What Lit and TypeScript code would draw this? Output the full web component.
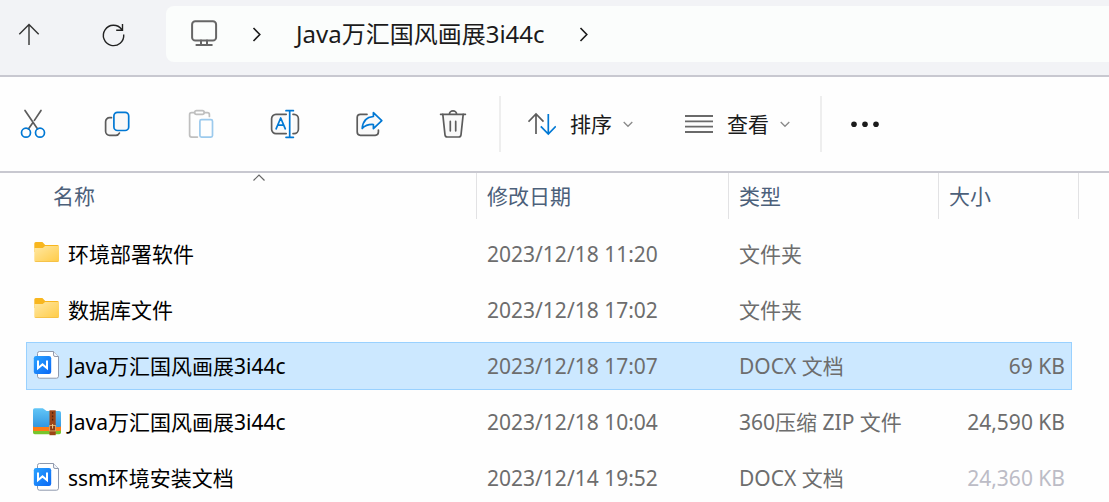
import { LitElement, html, css, svg } from "lit";
import { customElement, property, state } from "lit/decorators.js";
import { classMap } from "lit/directives/class-map.js";

type FileKind = "folder" | "doc" | "zip";

interface FileEntry {
  kind: FileKind;
  name: string;
  modified: string;
  type: string;
  size: string;
  faded?: boolean;
}

const files: FileEntry[] = [
  { kind: "folder", name: "环境部署软件", modified: "2023/12/18 11:20", type: "文件夹", size: "" },
  { kind: "folder", name: "数据库文件", modified: "2023/12/18 17:02", type: "文件夹", size: "" },
  { kind: "doc", name: "Java万汇国风画展3i44c", modified: "2023/12/18 17:07", type: "DOCX 文档", size: "69 KB" },
  { kind: "zip", name: "Java万汇国风画展3i44c", modified: "2023/12/18 10:04", type: "360压缩 ZIP 文件", size: "24,590 KB" },
  { kind: "doc", name: "ssm环境安装文档", modified: "2023/12/14 19:52", type: "DOCX 文档", size: "24,360 KB", faded: true },
];

const GREY = "#5c5c5c";
const BLUE = "#0078d4";

const toolIcons = {
  cut: svg`
    <path d="M8 2.5 20.6 21M24 2.5 17.4 12.4M15.6 15 11.4 21" stroke="${GREY}"/>
    <circle cx="9" cy="24.7" r="4.5" stroke="${BLUE}"/><circle cx="23" cy="24.7" r="4.5" stroke="${BLUE}"/>`,
  copy: svg`
    <path d="M10.5 9.7H8.6a4 4 0 0 0-4 4v9.6a4 4 0 0 0 4 4h6.2a4 4 0 0 0 3.6-2.2" stroke="${GREY}" fill="#f9f9f9"/>
    <rect x="12.9" y="4.3" width="14.8" height="18.2" rx="3.6" stroke="${BLUE}" fill="#f9f9f9"/>`,
  paste: svg`
    <g opacity=".38"><path d="M9.5 4.7H6.6a2 2 0 0 0-2 2v20.4a2 2 0 0 0 2 2h5.8M19.4 4.7h3a2 2 0 0 1 2 2v1.8" stroke="${GREY}"/>
    <rect x="9.6" y="2.6" width="9.6" height="3.8" rx="1.9" stroke="${GREY}"/>
    <rect x="14.9" y="11.6" width="12.6" height="17.5" rx="1.6" stroke="${BLUE}"/></g>`,
  rename: svg`
    <path d="M17.2 6.3H7a4.4 4.4 0 0 0-4.4 4.4v10.5A4.4 4.4 0 0 0 7 25.6h10.2M24 6.3h1a4.4 4.4 0 0 1 4.4 4.4v10.5a4.4 4.4 0 0 1-4.4 4.4h-1" stroke="${GREY}" fill="#f9f9f9"/>
    <path d="M7.1 20.8 11.7 10l4.6 10.8M8.7 17.2h6M20.7 2.7v26.6M17 2.7h7.4M17 29.3h7.4" stroke="${BLUE}"/>`,
  share: svg`
    <path d="M14 6.3H7.4a3.2 3.2 0 0 0-3.2 3.2v14.6a3.2 3.2 0 0 0 3.2 3.2h14.8a3.2 3.2 0 0 0 3.2-3.2v-2" stroke="${GREY}" fill="#f9f9f9"/>
    <path d="M20.4 4.7 28.8 12.7 20.4 20.7v-4.2c-5-.3-8.3.9-11.2 4 .5-7 4.4-11.5 11.2-12z" stroke="${BLUE}" fill="#f9f9f9"/>`,
  trash: svg`
    <path d="M5.8 6.3 8 26.9a2.4 2.4 0 0 0 2.4 2.1h11.2a2.4 2.4 0 0 0 2.4-2.1l2.2-20.6" stroke="${GREY}" fill="#f9f9f9"/>
    <path d="M3.6 6.3h24.8M12.4 6.1a3.6 3.3 0 0 1 7.2 0M13.3 13.4v9.4M18.7 13.4v9.4" stroke="${GREY}"/>`,
};

const fileIcons = {
  folder: svg`
    <path d="M1.3 5.6A1.5 1.5 0 0 1 2.8 4.1h6.6l2.8 2.9h12.2a1.6 1.6 0 0 1 1.6 1.6V14H1.3z" fill="#f8b61e"/>
    <path d="M1.3 9.9h8.5l2.2-1.9h14v14.4a1.6 1.6 0 0 1-1.6 1.6H2.9a1.6 1.6 0 0 1-1.6-1.6z" fill="url(#folderFill)"/>
    <path d="M1.7 23.2q.4.8 1.4.8h21.2q1 0 1.4-.8z" fill="#f3bd42"/>`,
  doc: svg`
    <path d="M6.5 1.500h14l5 5v19.700a2 2 0 0 1-2 2h-17a2 2 0 0 1-2-2V3.500a2 2 0 0 1 2-2z" fill="#fff" stroke="#8f99ad"/>
    <path d="M20.500 1.500v3.400a1.600 1.600 0 0 0 1.600 1.600h3.400" fill="#f1f4f9" stroke="#8f99ad"/>
    <rect x=".8" y="6" width="17.4" height="18" rx="2.2" fill="url(#docFill)"/>
    <path d="M5 10.600v7.600l4.500-3.800 4.500 3.800v-7.600" fill="none" stroke="#fff" stroke-width="2"/>`,
  zip: svg`
    <path d="M0 20h28v6.5a1.8 1.8 0 0 1-1.8 1.8H1.8A1.8 1.8 0 0 1 0 26.5z" fill="#77c52c"/>
    <path d="M0 19h28v4.6a1.5 1.5 0 0 1-1.5 1.5h-25A1.5 1.5 0 0 1 0 23.6z" fill="#ff7b16"/>
    <path d="M0 4a1.8 1.8 0 0 1 1.8-1.8h8L13.6 5h12.6A1.8 1.8 0 0 1 28 6.8v12.8a1.5 1.5 0 0 1-1.5 1.5h-25A1.5 1.5 0 0 1 0 19.6z" fill="url(#zipFill)"/>
    <path d="M16.5 4.3h6.2v24.9h-6.2z" fill="#9c4517"/>
    <path d="M19.6 6v10" stroke="#4f2310" stroke-width="1.3" stroke-dasharray="1.8 1.6"/>
    <rect x="16.6" y="19.5" width="6" height="5.4" fill="#8a3a10" stroke="#dca765" stroke-width="1"/>
    <path d="M19.6 18v4.6" stroke="#f3cf8d"/>`,
};

@customElement("file-icon")
class FileIcon extends LitElement {
  @property() kind: FileKind = "folder";

  static styles = css`
    :host { display: block; flex: none; width: 28px; height: 32px; }
    .glyph { display: block; width: 28px; height: 32px; }
  `;

  render() {
    return html`<svg class="glyph" viewBox="0 0 28 32" aria-hidden="true">
      <defs>
        <linearGradient id="folderFill" x1="0" y1="0" x2="1" y2="1">
          <stop offset="0" stop-color="#ffe8a4"/><stop offset="1" stop-color="#ffcb45"/>
        </linearGradient>
        <linearGradient id="docFill" x1="0" y1="0" x2="1" y2="1">
          <stop offset="0" stop-color="#2ba3ff"/><stop offset="1" stop-color="#0a68f5"/>
        </linearGradient>
        <linearGradient id="zipFill" x1="0" y1="0" x2="0" y2="1">
          <stop offset="0" stop-color="#62c6f7"/><stop offset="1" stop-color="#3397e0"/>
        </linearGradient>
      </defs>
      ${fileIcons[this.kind]}
    </svg>`;
  }
}

@customElement("app-root")
class AppRoot extends LitElement {
  @state() private selected = 2;

  static styles = css`
    :host {
      display: block;
      min-height: 100vh;
      overflow: hidden;
      background: #fefefe;
      color: #1b1b1b;
      font-family: "Noto Sans", "Noto Sans CJK SC", sans-serif;
      font-size: 21px;
      line-height: 32px;
    }
    button {
      padding: 0;
      border: 0;
      background: none;
      color: inherit;
      font: inherit;
    }
    svg { display: block; flex: none; fill: none; }
    .nav {
      display: flex;
      align-items: center;
      gap: 36px;
      padding: 6px 0 13px 5px;
      background: #f2f3f6;
      border-bottom: 2px solid #c8c8d0;
    }
    .icon-button {
      display: grid;
      place-items: center;
      flex: none;
      width: 48px;
      height: 48px;
    }
    .address {
      flex: 1;
      display: flex;
      align-items: center;
      height: 56px;
      margin-left: -7px;
      padding-left: 24px;
      border-radius: 8px 0 0 8px;
      background: #fbfdfc;
    }
    .crumb-arrow { margin: 0 34px; }
    .crumb {
      color: inherit;
      text-decoration: none;
      font-size: 24px;
      white-space: nowrap;
    }
    .toolbar {
      display: flex;
      align-items: center;
      height: 94px;
      border-bottom: 2px solid #c8c8d0;
    }
    .tools {
      display: flex;
      gap: 36px;
      padding: 0 22px 0 9px;
    }
    .tool { stroke-width: 1.7; stroke-linecap: round; stroke-linejoin: round; }
    .rule { flex: none; width: 2px; height: 56px; background: #eeeeee; }
    .menus { display: flex; gap: 52px; padding: 0 30px 0 27px; }
    .menu { display: flex; align-items: center; white-space: nowrap; }
    .menu-label { margin: 0 11px 0 14px; }
    .more { margin-left: 28px; }
    .dots { fill: #1b1b1b; }
    .list {
      width: calc(100% - 63px);
      margin: -8px 37px 0 26px;
      table-layout: fixed;
      border-collapse: separate;
      border-spacing: 0 8px;
    }
    .col-date { width: 252px; }
    .col-type { width: 210px; }
    .col-size { width: 133px; }
    .head { height: 49px; padding: 0; vertical-align: top; font-weight: 400; text-align: left; }
    .head-box {
      position: relative;
      height: 46px;
      border-right: 1px solid #e2e2e4;
      padding: 0 10px;
    }
    .head-name { margin-left: 15px; padding-left: 12px; }
    .head-last { margin-right: -7px; }
    .head-button { height: 46px; color: #4c607a; }
    .sort-mark { position: absolute; top: 1px; left: 50%; transform: translateX(-50%); }
    .cell {
      height: 46px;
      padding: 0 10px;
      border: solid transparent;
      border-width: 1px 0;
      color: #6d6d6d;
      white-space: nowrap;
    }
    .cell-name { padding: 0 0 0 6px; border-left-width: 1px; }
    .cell-size { padding: 0 6px 0 0; border-right-width: 1px; text-align: right; }
    .selected .cell { background: #cce8ff; border-color: #99d1ff; }
    .file { display: flex; align-items: center; gap: 7px; color: #000; text-decoration: none; }
    .faded { color: #bcbcc6; }
  `;

  private tool(name: keyof typeof toolIcons, label: string) {
    return html`<button class="icon-button" aria-label=${label} ?disabled=${name === "paste"}>
      <svg class="tool" width="32" height="32" viewBox="0 0 32 32">${toolIcons[name]}</svg>
    </button>`;
  }

  private chevron() {
    return html`<svg width="10" height="32" viewBox="0 0 10 32"><path d="m.7 14 4.3 4.3L9.3 14" stroke="#8a8a8a" stroke-width="1.3"/></svg>`;
  }

  private crumbArrow() {
    return html`<svg class="crumb-arrow" width="10" height="32" viewBox="0 0 10 32"><path d="m1.5 10 6.3 6.5-6.3 6.5" stroke="#1b1b1b" stroke-width="1.6"/></svg>`;
  }

  render() {
    return html`
      <nav class="nav">
        <button class="icon-button" aria-label="向上">
          <svg width="32" height="32" viewBox="0 0 32 32"><path d="M16 27V6.5M6.3 16.3 16 6.5l9.7 9.8" stroke="#333" stroke-width="1.4"/></svg>
        </button>
        <button class="icon-button" aria-label="刷新">
          <svg width="32" height="32" viewBox="0 0 32 32"><path d="M24.7 11.3A10.2 10.2 0 1 0 26.7 16.5M25.5 6v6.2h-6.3" stroke="#222" stroke-width="1.4"/></svg>
        </button>
        <div class="address">
          <svg width="28" height="32" viewBox="0 0 28 32" stroke="#666" stroke-width="2"><rect x="2.1" y="3.2" width="24" height="19.4" rx="3.2"/><path d="M11 22.6v4M17 22.6v4M6.4 26.9h15.4" stroke-linecap="round"/></svg>
          ${this.crumbArrow()}
          <a class="crumb" href="#">Java万汇国风画展3i44c</a>
          ${this.crumbArrow()}
        </div>
      </nav>
      <div class="toolbar" role="toolbar">
        <div class="tools">
          ${this.tool("cut", "剪切")} ${this.tool("copy", "复制")} ${this.tool("paste", "粘贴")}
          ${this.tool("rename", "重命名")} ${this.tool("share", "共享")} ${this.tool("trash", "删除")}
        </div>
        <span class="rule"></span>
        <div class="menus">
          <button class="menu">
            <svg width="28" height="32" viewBox="0 0 28 32" stroke-width="1.7"><path d="M8 26V6M.5 13.7 8 6l7.5 7.7" stroke="${GREY}"/><path d="M20.3 6v20M12.8 18.3l7.5 7.7 7.5-7.7" stroke="${BLUE}"/></svg>
            <span class="menu-label">排序</span>${this.chevron()}
          </button>
          <button class="menu">
            <svg width="28" height="32" viewBox="0 0 28 32" stroke="#6a6a6a" stroke-width="1.8"><path d="M0 8h28M0 13.3h28M0 18.7h28M0 24h28"/></svg>
            <span class="menu-label">查看</span>${this.chevron()}
          </button>
        </div>
        <span class="rule"></span>
        <button class="more" aria-label="更多">
          <svg class="dots" width="30" height="32" viewBox="0 0 30 32"><circle cx="4" cy="16.3" r="2.8"/><circle cx="15" cy="16.3" r="2.8"/><circle cx="26" cy="16.3" r="2.8"/></svg>
        </button>
      </div>
      <table class="list">
        <colgroup><col /><col class="col-date" /><col class="col-type" /><col class="col-size" /></colgroup>
        <thead>
          <tr>
            <th class="head" aria-sort="ascending"><div class="head-box head-name"><button class="head-button">名称</button>
              <svg class="sort-mark" width="12" height="8" viewBox="0 0 12 8"><path d="M.5 6.5 6 1l5.5 5.5" stroke="#666" stroke-width="1.2"/></svg></div></th>
            <th class="head"><div class="head-box"><button class="head-button">修改日期</button></div></th>
            <th class="head"><div class="head-box"><button class="head-button">类型</button></div></th>
            <th class="head"><div class="head-box head-last"><button class="head-button">大小</button></div></th>
          </tr>
        </thead>
        <tbody>
          ${files.map((f, i) => html`
            <tr class=${classMap({ selected: i === this.selected })} @click=${() => (this.selected = i)}>
              <td class="cell cell-name"><a class="file" href="#"><file-icon .kind=${f.kind}></file-icon>${f.name}</a></td>
              <td class="cell">${f.modified}</td>
              <td class="cell">${f.type}</td>
              <td class=${classMap({ cell: true, "cell-size": true, faded: !!f.faded })}>${f.size}</td>
            </tr>`)}
        </tbody>
      </table>
    `;
  }
}
